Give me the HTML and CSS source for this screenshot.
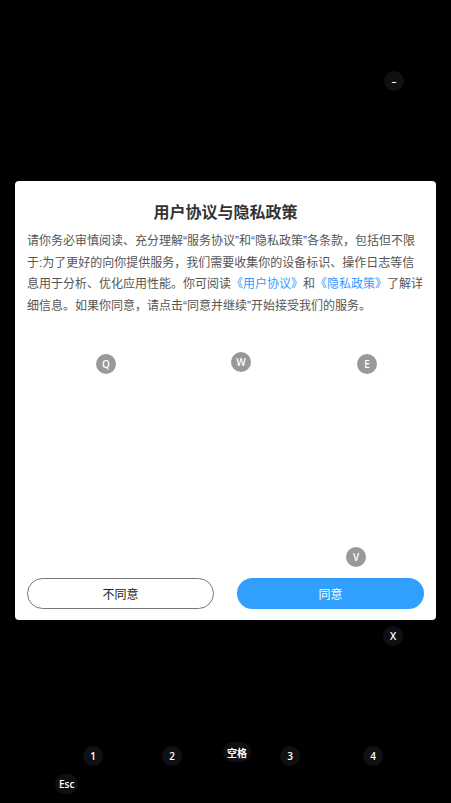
FILE: index.html
```html
<!DOCTYPE html>
<html lang="zh-CN">

<head>
  <meta charset="UTF-8">
  <title>用户协议与隐私政策</title>
  <link rel="stylesheet" href="styles.css">
</head>

<body>
  <section class="dialog">
    <h1 class="dialog-title">用户协议与隐私政策</h1>
    <p class="dialog-text">请你务必审慎阅读、充分理解“服务协议”和“隐私政策”各条款，包括但不限于:为了更好的向你提供服务，我们需要收集你的设备标识、操作日志等信息用于分析、优化应用性能。你可阅读<a class="link">《用户协议》</a>和<a class="link">《隐私政策》</a>了解详细信息。如果你同意，请点击“同意并继续”开始接受我们的服务。</p>
    <div class="actions">
      <button class="btn btn-plain">不同意</button>
      <button class="btn btn-primary">同意</button>
    </div>
  </section>

  <!-- 按键提示 -->
  <span class="key key-dark" style="left:384px;top:71px">–</span>
  <span class="key key-grey" style="left:96px;top:354px">Q</span>
  <span class="key key-grey" style="left:231px;top:352px">W</span>
  <span class="key key-grey" style="left:357px;top:354px">E</span>
  <span class="key key-grey" style="left:346px;top:547px">V</span>
  <span class="key key-dark" style="left:383px;top:626px">X</span>
  <span class="key key-dark" style="left:83px;top:746px">1</span>
  <span class="key key-dark" style="left:162px;top:746px">2</span>
  <span class="key key-dark key-wide" style="left:223px;top:742px">空格</span>
  <span class="key key-dark" style="left:280px;top:746px">3</span>
  <span class="key key-dark" style="left:363px;top:746px">4</span>
  <span class="key key-dark key-wide" style="left:55px;top:774px">Esc</span>
</body>

</html>
```

FILE: styles.css
```css
body {
  margin: 0;
  padding: 181px 15px 0 15px;
  height: 803px;
  box-sizing: border-box;
  background: #000;
  font-family: "Noto Sans CJK SC", "Noto Sans", sans-serif;
  position: relative;
}

.dialog {
  width: 421px;
  height: 439px;
  box-sizing: border-box;
  padding: 19px 12px 11px;
  background: #fff;
  border-radius: 4px;
  display: flex;
  flex-direction: column;
}

.dialog-title {
  margin: 0;
  font-size: 16px;
  line-height: 22px;
  font-weight: bold;
  color: #333;
  text-align: center;
}

.dialog-text {
  margin: 9px 0 0;
  font-family: "Liberation Sans", "Noto Sans CJK SC", sans-serif;
  font-size: 12px;
  line-height: 21.7px;
  color: #555;
}

.link {
  color: #3399ff;
  text-decoration: none;
}

.actions {
  margin-top: auto;
  display: flex;
  justify-content: space-between;
}

.btn {
  width: 187px;
  height: 31px;
  box-sizing: border-box;
  border-radius: 16px;
  font-family: inherit;
  font-size: 12px;
  padding: 0;
  cursor: pointer;
}

.btn-plain {
  background: #fff;
  border: 1px solid #777;
  color: #222;
}

.btn-primary {
  background: #309ffd;
  border: none;
  color: #fff;
}

.key {
  position: absolute;
  width: 20px;
  height: 20px;
  border-radius: 10px;
  display: flex;
  align-items: center;
  justify-content: center;
  font-family: "Open Sans", "Noto Sans CJK SC", sans-serif;
  font-size: 10px;
  font-weight: 600;
  color: #fff;
}

.key-grey {
  background: #999;
}

.key-dark {
  background: #0e1013;
}

.key-wide {
  width: auto;
  padding: 0 4px;
}
```
